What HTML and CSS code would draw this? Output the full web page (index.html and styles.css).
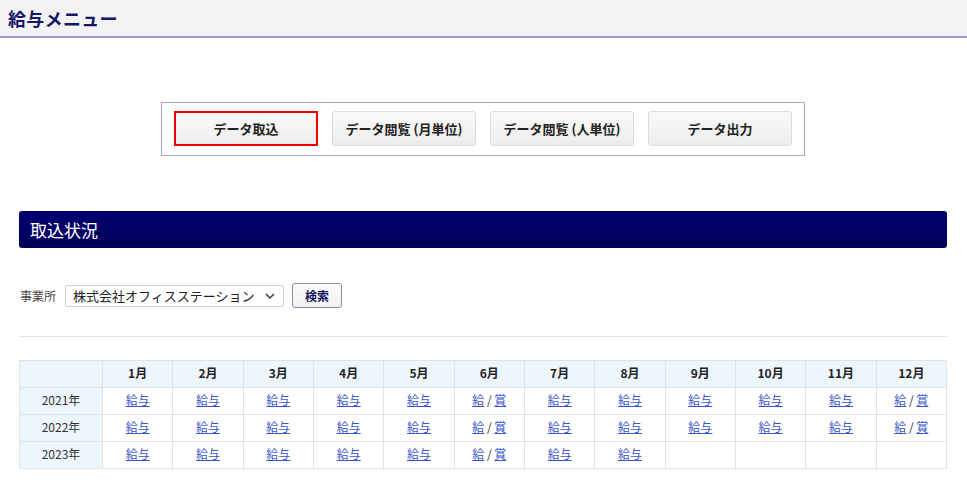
FILE: index.html
```html
<!DOCTYPE html>
<html lang="ja">
<head>
<meta charset="utf-8">
<title>給与メニュー</title>
<link rel="stylesheet" href="styles.css">
</head>
<body>
<header class="page-header">
  <h1 class="page-title">給与メニュー</h1>
</header>
<main class="content">
  <nav class="menu-box">
    <button class="menu-btn active">データ取込</button>
    <button class="menu-btn">データ閲覧 (月単位)</button>
    <button class="menu-btn">データ閲覧 (人単位)</button>
    <button class="menu-btn">データ出力</button>
  </nav>
  <h2 class="section-bar">取込状況</h2>
  <div class="filter">
    <label class="filter-label">事業所</label>
    <div class="select">
      <span>株式会社オフィスステーション</span>
      <svg class="chev" width="10" height="6" viewBox="0 0 10 6"><path d="M1 1l4 4 4-4" fill="none" stroke="#333" stroke-width="1.4"/></svg>
    </div>
    <button class="search-btn">検索</button>
  </div>
  <hr class="divider">
  <table class="status">
    <thead>
      <tr><th class="year"></th><th>1月</th><th>2月</th><th>3月</th><th>4月</th><th>5月</th><th>6月</th><th>7月</th><th>8月</th><th>9月</th><th>10月</th><th>11月</th><th>12月</th></tr>
    </thead>
    <tbody>
      <tr><th class="year">2021年</th><td><a href="#">給与</a></td><td><a href="#">給与</a></td><td><a href="#">給与</a></td><td><a href="#">給与</a></td><td><a href="#">給与</a></td><td><a href="#">給</a> / <a href="#">賞</a></td><td><a href="#">給与</a></td><td><a href="#">給与</a></td><td><a href="#">給与</a></td><td><a href="#">給与</a></td><td><a href="#">給与</a></td><td><a href="#">給</a> / <a href="#">賞</a></td></tr>
      <tr><th class="year">2022年</th><td><a href="#">給与</a></td><td><a href="#">給与</a></td><td><a href="#">給与</a></td><td><a href="#">給与</a></td><td><a href="#">給与</a></td><td><a href="#">給</a> / <a href="#">賞</a></td><td><a href="#">給与</a></td><td><a href="#">給与</a></td><td><a href="#">給与</a></td><td><a href="#">給与</a></td><td><a href="#">給与</a></td><td><a href="#">給</a> / <a href="#">賞</a></td></tr>
      <tr><th class="year">2023年</th><td><a href="#">給与</a></td><td><a href="#">給与</a></td><td><a href="#">給与</a></td><td><a href="#">給与</a></td><td><a href="#">給与</a></td><td><a href="#">給</a> / <a href="#">賞</a></td><td><a href="#">給与</a></td><td><a href="#">給与</a></td><td></td><td></td><td></td><td></td></tr>
    </tbody>
  </table>
</main>
</body>
</html>
```
FILE: styles.css
```css
* { box-sizing: border-box; }
body {
  margin: 0;
  font-family: "Noto Sans CJK JP", "Noto Sans", sans-serif;
  color: #333;
  background: #fff;
}
.page-header {
  height: 38px;
  background: #f3f3f3;
  border-bottom: 2px solid #9c9cd2;
  padding: 0 8px;
  display: flex;
  align-items: center;
}
.page-title {
  margin: 0;
  font-size: 18px;
  font-weight: 700;
  color: #171767;
  letter-spacing: 0.3px;
  line-height: 1;
}
.content {
  padding: 0 20px 0 19px;
}
.menu-box {
  width: 644px;
  margin: 64px auto 0;
  border: 1px solid #a6a6cf;
  padding: 8px 12px 9px;
  display: flex;
  gap: 14px;
}
.menu-btn {
  width: 144px;
  height: 35px;
  border: 1px solid #dcdcdc;
  border-radius: 3px;
  background: linear-gradient(#fafafa, #ededed);
  font-family: inherit;
  font-size: 13px;
  font-weight: 700;
  color: #222;
  padding: 0;
}
.menu-btn.active {
  border: 2px solid #ee0000;
  border-radius: 0;
}
.section-bar {
  margin: 55px 0 0;
  height: 37px;
  background: linear-gradient(#000070, #000058);
  border-radius: 3px;
  color: #fff;
  font-size: 17px;
  font-weight: 400;
  padding: 0 11px;
  display: flex;
  align-items: center;
}
.filter {
  margin-top: 35px;
  display: flex;
  align-items: center;
}
.filter-label {
  font-size: 12px;
  color: #444;
  width: 45px;
  margin-left: 1px;
}
.select {
  width: 219px;
  height: 22px;
  border: 1px solid #cfcfcf;
  border-radius: 2px;
  display: flex;
  align-items: center;
  justify-content: space-between;
  padding: 0 8px 0 7px;
  font-size: 13px;
  color: #222;
}
.chev { display: block; }
.search-btn {
  margin-left: 8px;
  width: 50px;
  height: 25px;
  border: 1px solid #8a8abb;
  border-radius: 3px;
  background: linear-gradient(#fbfbfb, #f0f0f0);
  font-family: inherit;
  font-size: 12px;
  font-weight: 700;
  color: #14145e;
  padding: 0;
}
.divider {
  margin: 28px 0 0;
  border: 0;
  border-top: 1px solid #e3e3e3;
}
.status {
  margin-top: 23px;
  width: 928px;
  border-collapse: collapse;
  table-layout: fixed;
  font-size: 12px;
  line-height: 1.2;
}
.status th, .status td {
  border: 1px solid #e2e2e2;
  height: 27px;
  text-align: center;
  padding: 0 0 2px;
}
.status thead th {
  background: #eef6fd;
  font-weight: 700;
  color: #222;
}
.status th.year {
  width: 83px;
  background: #eef6fd;
  font-weight: 400;
  color: #333;
}
.status td { color: #333; }
.status a {
  color: #3a55c8;
  text-decoration: underline;
}
```
